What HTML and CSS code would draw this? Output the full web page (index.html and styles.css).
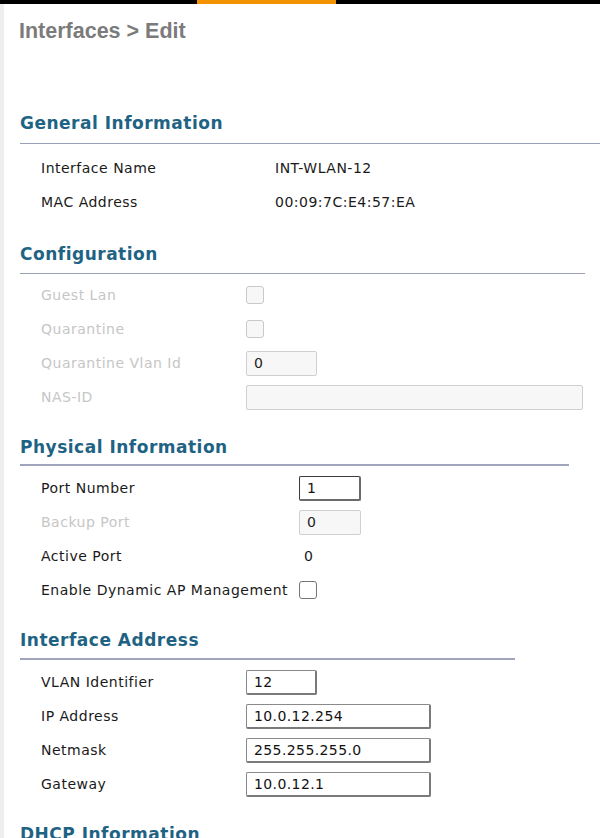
FILE: index.html
```html
<!DOCTYPE html>
<html>
<head>
<meta charset="utf-8">
<link rel="stylesheet" href="styles.css">
</head>
<body>
<div class="topbar"><span class="topbar-gap"></span><span class="topbar-accent"></span></div>
<div class="page">
  <h1 class="title">Interfaces &gt; Edit</h1>

  <section class="sec sec-general">
    <h2 class="sec-head line-full">General Information</h2>
    <div class="row"><span class="lbl lbl-w1">Interface Name</span><span class="val">INT-WLAN-12</span></div>
    <div class="row"><span class="lbl lbl-w1">MAC Address</span><span class="val">00:09:7C:E4:57:EA</span></div>
  </section>

  <section class="sec sec-config">
    <h2 class="sec-head line-585">Configuration</h2>
    <div class="row dis"><span class="lbl lbl-w2">Guest Lan</span><span class="cb cb-dis"></span></div>
    <div class="row dis"><span class="lbl lbl-w2">Quarantine</span><span class="cb cb-dis"></span></div>
    <div class="row dis"><span class="lbl lbl-w2">Quarantine Vlan Id</span><span class="inp inp-dis inp-s">0</span></div>
    <div class="row dis"><span class="lbl lbl-w2">NAS-ID</span><span class="inp inp-dis inp-xl"></span></div>
  </section>

  <section class="sec sec-physical">
    <h2 class="sec-head line-569">Physical Information</h2>
    <div class="row"><span class="lbl lbl-w3">Port Number</span><span class="inp inp-act inp-p">1</span></div>
    <div class="row dis"><span class="lbl lbl-w3">Backup Port</span><span class="inp inp-dis inp-p">0</span></div>
    <div class="row"><span class="lbl lbl-w3">Active Port</span><span class="val val-pad">0</span></div>
    <div class="row"><span class="lbl lbl-w3">Enable Dynamic AP Management</span><span class="cb"></span></div>
  </section>

  <section class="sec sec-address">
    <h2 class="sec-head line-515">Interface Address</h2>
    <div class="row"><span class="lbl lbl-w2">VLAN Identifier</span><span class="inp inp-s">12</span></div>
    <div class="row"><span class="lbl lbl-w2">IP Address</span><span class="inp inp-m">10.0.12.254</span></div>
    <div class="row"><span class="lbl lbl-w2">Netmask</span><span class="inp inp-m">255.255.255.0</span></div>
    <div class="row"><span class="lbl lbl-w2">Gateway</span><span class="inp inp-m">10.0.12.1</span></div>
  </section>

  <section class="sec sec-last">
    <h2 class="sec-head">DHCP Information</h2>
  </section>
</div>
</body>
</html>
```

FILE: styles.css
```css
html, body {
  margin: 0;
  padding: 0;
  background: #fff;
}
body {
  font-family: "DejaVu Sans", Verdana, sans-serif;
  font-size: 14px;
  letter-spacing: 0.5px;
  color: #1a1a1a;
  overflow: hidden;
  height: 838px;
}
.topbar {
  display: flex;
  height: 4px;
  background: #000;
}
.topbar-gap {
  width: 197px;
}
.topbar-accent {
  width: 139px;
  background: #f39200;
}
.page {
  border-left: 4px solid #eeeeee;
  padding-left: 16px;
  min-height: 834px;
  box-sizing: border-box;
}
.title {
  margin: 0 0 0 -1px;
  padding-top: 15px;
  font-family: "Liberation Sans", Arial, sans-serif;
  font-weight: bold;
  font-size: 21.5px;
  line-height: 24px;
  letter-spacing: 0;
  color: #7b7b7b;
}
.sec {
  margin-top: 22px;
}
.sec-head {
  margin: 0 0 5px 0;
  font-size: 17px;
  line-height: 20px;
  font-weight: bold;
  color: #1f6384;
  padding-bottom: 9px;
  letter-spacing: 0.5px;
}
.sec-general {
  margin-top: 70px;
}
.sec-general .sec-head {
  padding-bottom: 10px;
  margin-bottom: 7px;
}
.sec-config {
  margin-top: 25px;
}
.sec-config .sec-head {
  margin-bottom: 4px;
}
.sec-physical {
  margin-top: 23px;
}
.sec-physical .sec-head {
  padding-bottom: 7px;
  margin-bottom: 5px;
}
.sec-address {
  margin-top: 23px;
}
.sec-address .sec-head {
  padding-bottom: 8px;
  margin-bottom: 5px;
}
.line-full { border-bottom: 1px solid #9a9fb8; }
.line-585 { border-bottom: 1px solid #9a9fb8; width: 565px; }
.line-569 { border-bottom: 2px solid #a0a5bd; width: 549px; }
.line-515 { border-bottom: 2px solid #a0a5bd; width: 495px; }
.row {
  display: flex;
  align-items: center;
  height: 34px;
  padding-left: 21px;
}
.lbl {
  flex: none;
}
.lbl-w1 { width: 234px; }
.lbl-w2 { width: 205px; }
.lbl-w3 { width: 258px; }
.dis .lbl { color: #c6c6c6; }
.val { color: #1a1a1a; }
.val-pad { padding-left: 5px; }
.cb {
  box-sizing: border-box;
  width: 18px;
  height: 18px;
  border: 1px solid #767676;
  border-radius: 3px;
  background: #fff;
}
.cb-dis {
  border-color: #c9c9c9;
  background: #f7f7f7;
}
.inp {
  box-sizing: border-box;
  height: 25px;
  border-style: solid;
  border-width: 1px 2px 2px 1px;
  border-color: #8a8a8a #7a7a7a #7a7a7a #8a8a8a;
  border-radius: 2px;
  padding-left: 7px;
  line-height: 22px;
  background: #fff;
  color: #111;
  letter-spacing: 0.4px;
}
.inp-dis {
  background: #f7f7f7;
  border-color: #d0d0d0;
  border-width: 1px;
  color: #222;
}
.inp-act {
  border-color: #3c3c3c #6a6a6a #6a6a6a #3c3c3c;
}
.inp-s { width: 71px; }
.inp-p { width: 62px; }
.inp-m { width: 185px; }
.inp-xl { width: 337px; }
.sec-last { margin-top: 23px; }
```
